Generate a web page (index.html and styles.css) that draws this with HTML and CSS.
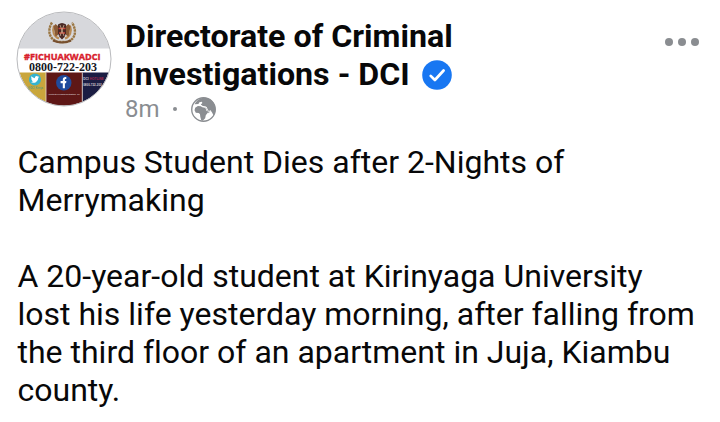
FILE: index.html
```html
<!DOCTYPE html>
<html lang="en">
<head>
    <meta charset="UTF-8">
    <meta name="viewport" content="width=device-width, initial-scale=1.0">
    <title>Directorate of Criminal Investigations - DCI</title>
    <link rel="stylesheet" href="styles.css">
</head>
<body>
    <article class="post">
        <header class="post-header">
            <svg class="avatar" viewBox="0 0 96 96">
                <defs>
                    <clipPath id="round"><circle cx="48" cy="48" r="46.5"/></clipPath>
                </defs>
                <g clip-path="url(#round)">
                    <rect width="96" height="96" fill="#fff"/>
                    <rect width="96" height="37.5" fill="#d7d8dc"/>
                    <rect y="61.5" width="30" height="35" fill="#c9a63c"/>
                    <rect x="30" y="61.5" width="36.3" height="35" fill="#5e1716"/>
                    <rect x="66.3" y="61.5" width="30" height="35" fill="#1b1d43"/>
                    <path d="M30 61.5V96M66.3 61.5V96" stroke="#e6d9cf" stroke-width=".8"/>
                </g>
                <circle cx="48" cy="48" r="47" fill="none" stroke="#b9babd" stroke-width="1"/>
                <!-- coat of arms -->
                <g transform="translate(-1 -1.5)">
                    <path d="M37 13C32 21 34 30.500 44 32.500H51C61 30.500 62 21 57 13" fill="none" stroke="#9a7642" stroke-width="2.400" stroke-dasharray="2.500 .6"/>
                    <path d="M39 16c-2 6 0 11 5 13M55 16c2 6 0 11-5 13" fill="none" stroke="#b98b54" stroke-width="2.200"/>
                    <path d="M38.500 17l2-2.500 2.500 2v9l-2.500 1.500zM55.500 17l-2-2.500-2.500 2v9l2.500 1.500z" fill="#8a5a35"/>
                    <path d="M43 15q4-3 8 0v9q-1 4-4 6-3-2-4-6z" fill="#4a2925"/>
                    <path d="M43.500 19h7M44 23.500h6" stroke="#c9443a" stroke-width="1.300"/>
                    <path d="M45 15.500l4 11M49 15.500l-4 11" stroke="#dcc7a3" stroke-width=".7"/>
                    <path d="M38 31q9 4 18 0" fill="none" stroke="#775030" stroke-width="2.200"/>
                </g>
                <text class="hashtag" x="8" y="49.400" textLength="76.500" lengthAdjust="spacingAndGlyphs">#FICHUAKWADCI</text>
                <text class="hotline" x="12.900" y="59.800" textLength="68" lengthAdjust="spacingAndGlyphs">0800-722-203</text>
                <!-- twitter -->
                <circle cx="19" cy="68.500" r="6" fill="#35b3cf"/>
                <path transform="translate(14.800 64.200) scale(.35)" fill="#fff" d="M24 4.600a10 10 0 0 1-2.800.8 5 5 0 0 0 2.100-2.700 10 10 0 0 1-3.100 1.200 4.900 4.900 0 0 0-8.400 4.500A14 14 0 0 1 1.700 3.200a4.900 4.900 0 0 0 1.500 6.500 5 5 0 0 1-2.200-.6 4.900 4.900 0 0 0 3.900 4.900 5 5 0 0 1-2.200.1 4.900 4.900 0 0 0 4.600 3.400A10 10 0 0 1 0 19.500a14 14 0 0 0 21.500-12.400A10 10 0 0 0 24 4.600z"/>
                <text class="tiny teal" x="11.800" y="78" textLength="15" lengthAdjust="spacingAndGlyphs">@DCI_Kenya</text>
                <!-- facebook -->
                <circle cx="47.800" cy="71.700" r="7.700" fill="#204b9c"/>
                <path d="M46.800 77.300v-5h-2.200v-2.200h2.200v-1.300c0-2 1.200-3 3.500-2.700v2c-1-.1-1.400.2-1.400 1v1h1.500l-.3 2.200h-1.200v5z" fill="#fff"/>
                <text class="tiny motto" x="32.800" y="84.300" textLength="31" lengthAdjust="spacingAndGlyphs">Directorate of Criminal Investigations - DCI</text>
                <text class="tag" x="67.200" y="69.300" textLength="5.500" lengthAdjust="spacingAndGlyphs">DCI</text>
                <text class="tag red" x="73.700" y="69.300" textLength="14" lengthAdjust="spacingAndGlyphs">HOTLINE</text>
                <text class="tiny" x="67.200" y="75.300" textLength="18.500" lengthAdjust="spacingAndGlyphs">0800-722-203</text>
            </svg>

            <div class="author">
                <h1 class="name">Directorate of Criminal<br><span>Investigations - DCI</span>
                    <svg class="verified" viewBox="0 0 30 30">
                        <circle cx="15" cy="15" r="14.800" fill="#1877f2"/>
                        <path d="M8.700 15.900l4.200 4.100 8.700-9.500" fill="none" stroke="#fff" stroke-width="2.700" stroke-linecap="round" stroke-linejoin="round"/>
                    </svg>
                </h1>
                <div class="meta">
                    <span>8m</span>
                    <span class="dot"></span>
                    <svg class="globe" viewBox="0 0 24 24">
                        <circle cx="12" cy="12" r="11.300" fill="#fff" stroke="#8a8d91" stroke-width="1.300"/>
                        <path fill="#8a8d91" d="M3.500 7C5.500 3 9 .8 13 .8c6 0 10.500 5 10.500 11 0 2.300-.7 4.300-1.800 6l-1.500-3-1.300-1.800-1.900 2.500-1.700-3-1.400-3-3-.8-1.500-1.500 1.500-1.400-.5-1.300-2.300.6-1 1.700z"/>
                        <path fill="#8a8d91" d="M4 10.200l2.600-1.500 3 .2 1.300 1 2.800.5 1.300 3 2 .6-2.800 3.600-.6 2.700-2.300 2.400-1.500-.5-.9-3.300-.3-2.700-1.300-.9-2.700-.2-1.200-2.300z"/>
                        <path fill="none" stroke="#fff" stroke-width=".9" d="M8.500 7.700l3 1.400 3.100.5 1.400 3.200 1.300 1.200 1.500-1"/>
                    </svg>
                </div>
            </div>

            <div class="more">
                <i></i><i></i><i></i>
            </div>
        </header>

        <div class="post-body">
            <p>Campus Student Dies after 2-Nights of<br>Merrymaking</p>
            <p>A 20-year-old student at Kirinyaga University<br>lost his life yesterday morning, after falling from<br>the third floor of an apartment in Juja, Kiambu<br>county.</p>
        </div>
    </article>
</body>
</html>
```
FILE: styles.css
```css
body {
    margin: 0;
    background-color: #fff;
    font-family: Roboto, Arial, sans-serif;
    font-variant-ligatures: none;
    color: #080809;
}
.post {
    padding: 11px 17.5px 0;
}
.post-header {
    display: flex;
    height: 132px;
}
.avatar {
    flex: none;
    width: 96px;
    height: 96px;
    margin-left: -1.5px;
}
.hashtag {
    font: bold 9.5px "Open Sans", sans-serif;
    fill: #d8202c;
    stroke: #d8202c;
    stroke-width: .4px;
}
.hotline {
    font: bold 11.5px "Liberation Serif", serif;
    fill: #16181f;
}
.tiny {
    font: bold 3.2px "Liberation Sans", sans-serif;
    fill: #d9cdd0;
}
.motto {
    font-size: 2.4px;
}
.teal {
    fill: #5f9a78;
}
.tag {
    font: bold 4px "Liberation Sans", sans-serif;
    fill: #c9cadb;
}
.red {
    fill: #a3264a;
}
.author {
    flex: 1;
    margin: 6px 0 0 13px;
}
.name {
    margin: 0;
    font-size: 32.2px;
    line-height: 38px;
    font-weight: bold;
    white-space: nowrap;
}
.verified {
    width: 30px;
    height: 30px;
    margin-left: 4px;
    vertical-align: -5px;
}
.meta {
    display: flex;
    align-items: center;
    height: 32px;
    font-size: 24px;
    color: #8a8d91;
}
.dot {
    width: 4px;
    height: 4px;
    margin: 0 14px 0 13px;
    border-radius: 50%;
    background-color: #8a8d91;
}
.globe {
    width: 25px;
    height: 25px;
}
.more {
    display: flex;
    gap: 5px;
    margin: 27px 3.5px 0 0;
}
.more i {
    width: 8px;
    height: 8px;
    border-radius: 50%;
    background-color: #8a8d91;
}
.post-body {
    font-size: 32px;
    line-height: 38px;
    white-space: nowrap;
}
.post-body p {
    margin: 0 0 38px;
}
.post-body p:last-child {
    margin-bottom: 0;
}
```
